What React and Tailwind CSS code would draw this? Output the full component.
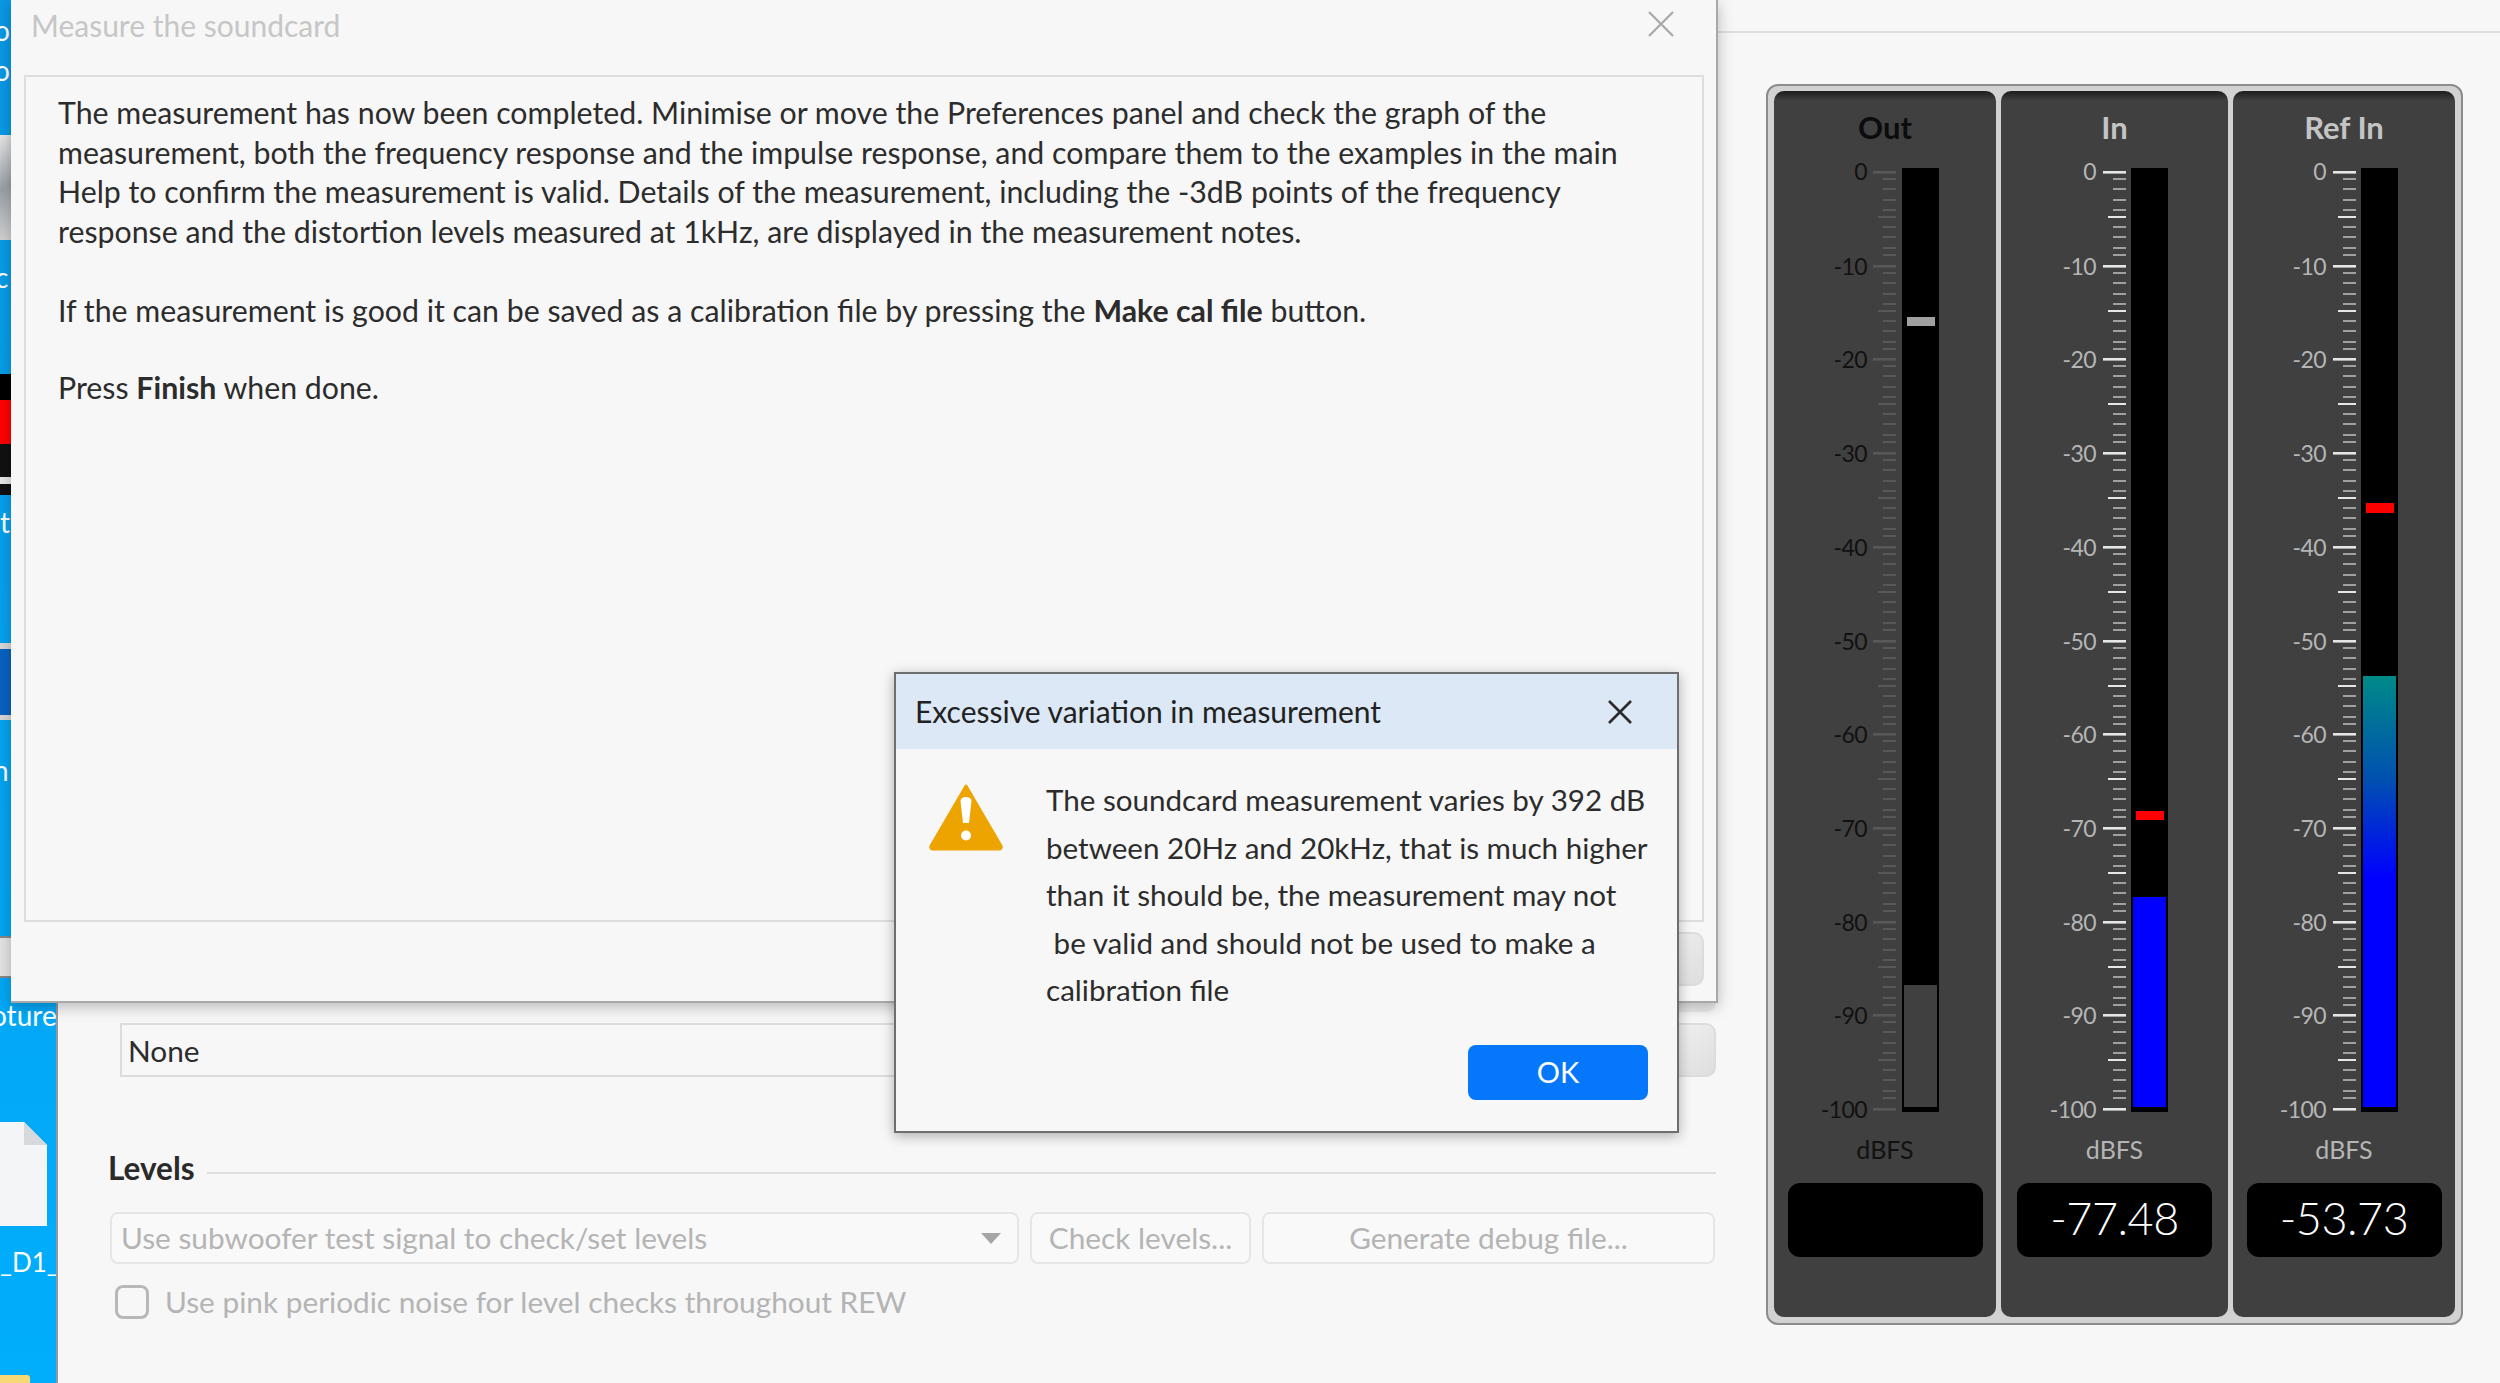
import React from "react";

const FONT = "font-['Lato','Open_Sans',sans-serif]";
const DECADE = [0, 7, 17, 28, 38, 45, 55, 65, 76, 83];

function Scale({ tickEnd, labelEnd, tickMajor, tickMinor, labelColor }) {
  const items = [];
  for (let d = 0; d <= 10; d++) {
    const base = 172 + Math.round(d * 93.7) - 161;
    const offs = d === 10 ? [0] : DECADE;
    offs.forEach((o, i) => {
      const len = i === 0 ? 23 : i === 5 ? 18 : 13;
      const col = i === 0 || i === 5 ? tickMajor : tickMinor;
      items.push(<rect key={d + "-" + i} x={tickEnd - len} y={base + o - 1} width={len} height={i === 0 ? 2.6 : 2} fill={col} />);
    });
    items.push(
      <text key={"l" + d} x={labelEnd} y={base + 8 + (d ? 1 : 0)} textAnchor="end" fontSize="23" letterSpacing="-0.6" fill={labelColor} fontFamily="Lato">
        {d === 0 ? "0" : "-" + d * 10}
      </text>
    );
  }
  return <>{items}</>;
}

function Meter({ width, title, titleColor, barX, tickEnd, labelEnd, tickMajor, tickMinor, labelColor, fill, peak, value }) {
  return (
    <div className="relative flex flex-col items-center h-[1226px] rounded-[10px] bg-[linear-gradient(#1d1d1d,#404040_10px)]" style={{ width }}>
      <div className={`h-[70px] pt-[16px] text-[31px] leading-[40px] font-bold ${titleColor}`}>{title}</div>
      <svg width={width} height="960" className="block shrink-0">
        <Scale tickEnd={tickEnd} labelEnd={labelEnd} tickMajor={tickMajor} tickMinor={tickMinor} labelColor={labelColor} />
        <rect x={barX} y="7" width="37" height="944" fill="#000" />
        <defs>
          <linearGradient id="refgrad" x1="0" y1="0" x2="0" y2="1">
            <stop offset="0" stopColor="#008a88" />
            <stop offset="0.24" stopColor="#0050b0" />
            <stop offset="0.47" stopColor="#0000ff" />
            <stop offset="1" stopColor="#0000ff" />
          </linearGradient>
        </defs>
        <rect x={barX + 2} y={fill.top - 161} width="33" height={1107 - fill.top} fill={fill.color} />
        <rect x={barX + 5} y={peak.top - 161} width="28" height={peak.h} fill={peak.color} />
      </svg>
      <div className={`h-[58px] text-[25px] leading-[56px] ${labelColor === "#111111" ? "text-[#111111]" : "text-[#b5b5b5]"}`}>dBFS</div>
      <div className="mt-[4px] w-[195px] h-[74px] rounded-[12px] bg-black text-white text-[45px] leading-[70px] text-center tracking-[-0.5px] font-light">
        {value}
      </div>
    </div>
  );
}

function Btn({ className, children }) {
  return (
    <div className={`flex items-center justify-center rounded-[8px] border-2 border-[#e6e6e6] bg-[#f9f9f9] text-[#b4b4b4] ${className}`}>
      {children}
    </div>
  );
}

function GrayBtn({ className }) {
  return <div className={`rounded-[10px] border-2 border-[#dcdcdc] bg-[linear-gradient(135deg,#f4f4f4,#dedede)] ${className}`} />;
}

function Desktop() {
  return (
    <div className="relative w-[58px] h-full shrink-0 bg-[linear-gradient(#0a98e4,#00aefc)] border-r-2 border-r-[#8f9aa3] overflow-hidden text-white text-[28px] leading-[34px]">
      <span className="absolute left-[-6px] top-[13px]">o</span>
      <span className="absolute left-[-6px] top-[53px]">o</span>
      <div className="absolute left-0 top-[135px] w-[11px] h-[105px] bg-[linear-gradient(160deg,#e8e8e8,#9aa0a6,#d5d5d5)]" />
      <span className="absolute left-[-5px] top-[260px]">c</span>
      <div className="absolute left-0 top-[374px] w-[11px] h-[26px] bg-black" />
      <div className="absolute left-0 top-[400px] w-[11px] h-[44px] bg-[#ff0000]" />
      <div className="absolute left-0 top-[444px] w-[11px] h-[51px] bg-[#111111]" />
      <div className="absolute left-0 top-[477px] w-[11px] h-[7px] bg-[#e8e8e8]" />
      <span className="absolute left-0 top-[505px]">t</span>
      <div className="absolute left-0 top-[643px] w-[11px] h-[77px] border-t-[6px] border-b-[5px] border-[#d8d8d8] bg-[#0a62c0]" />
      <span className="absolute left-[-7px] top-[753px]">n</span>
      <div className="absolute left-0 top-[936px] w-[11px] h-[42px] bg-[#e4e4e4] border-y-2 border-[#888888]" />
      <span className="absolute left-[-9px] top-[998px]">oture</span>
      <svg className="absolute left-0 top-[1122px]" width="48" height="105">
        <path d="M0 0H24L47 23V104H0Z" fill="#f3f5f7" />
        <path d="M24 0V23H47Z" fill="#d7dadd" />
      </svg>
      <span className="absolute left-0 top-[1245px] whitespace-nowrap text-[26px]">_D1_</span>
      <div className="absolute left-0 top-[1375px] w-[30px] h-[8px] rounded-tr-[3px] bg-[#f8d775]" />
    </div>
  );
}

function MeasureDialog() {
  return (
    <div className="absolute left-[11px] top-0 w-[1707px] h-[1003px] flex flex-col bg-[#f7f7f7] border-r-2 border-b-2 border-[#a8a8a8] shadow-[0_4px_14px_rgba(0,0,0,0.25)]">
      <div className="h-[75px] flex justify-between pl-[20px] pr-[42px] pt-[4px] text-[30px] leading-[42px] text-[#c6c6c6]">
        <span>Measure the soundcard</span>
        <svg width="26" height="26" className="mt-[7px]" stroke="#a8a8a8" strokeWidth="2.2">
          <path d="M1 1L25 25M25 1L1 25" />
        </svg>
      </div>
      <div className="ml-[13px] w-[1680px] h-[847px] border-2 border-[#dedede] pl-[32px] pt-[16px] text-[30.3px] leading-[39.5px] text-[#2c2c2c]">
        <p>The measurement has now been completed. Minimise or move the Preferences panel and check the graph of the</p>
        <p>measurement, both the frequency response and the impulse response, and compare them to the examples in the main</p>
        <p>Help to confirm the measurement is valid. Details of the measurement, including the -3dB points of the frequency</p>
        <p>response and the distortion levels measured at 1kHz, are displayed in the measurement notes.</p>
        <p className="mt-[39.5px]">If the measurement is good it can be saved as a calibration file by pressing the <b>Make cal file</b> button.</p>
        <p className="mt-[38px]">Press <b>Finish</b> when done.</p>
      </div>
      <div className="flex justify-end pr-[12px] pt-[10px]">
        <GrayBtn className="w-[60px] h-[54px]" />
      </div>
    </div>
  );
}

function AlertDialog() {
  return (
    <div className="absolute left-[894px] top-[672px] w-[785px] h-[461px] flex flex-col bg-[#f7f7f7] border-2 border-[#6e6e6e] shadow-[0_3px_12px_rgba(0,0,0,0.3)]">
      <div className="h-[75px] shrink-0 flex items-center justify-between pl-[19px] pr-[45px] bg-[#dce8f6] text-[30px] text-[#222222]">
        <span>Excessive variation in measurement</span>
        <svg width="24" height="24" stroke="#2a2a2a" strokeWidth="2.6">
          <path d="M1 1L23 23M23 1L1 23" />
        </svg>
      </div>
      <div className="flex pl-[32px] pr-[30px]">
        <svg width="76" height="68" viewBox="0 0 76 68" className="mt-[34px] shrink-0">
          <path d="M38 3L73 63a2 2 0 0 1-2 3H5a2 2 0 0 1-2-3Z" fill="#eea400" stroke="#eea400" strokeWidth="3" strokeLinejoin="round" />
          <path d="M32.5 18a5.5 4 0 0 1 11 0L41 40h-6Z" fill="#fff" />
          <circle cx="38" cy="52.5" r="5" fill="#fff" />
        </svg>
        <div className="ml-[42px] pt-[27px] text-[29.6px] leading-[47.5px] text-[#2c2c2c] whitespace-pre">
          <p>The soundcard measurement varies by 392 dB</p>
          <p>between 20Hz and 20kHz, that is much higher</p>
          <p>than it should be, the measurement may not</p>
          <p> be valid and should not be used to make a</p>
          <p>calibration file</p>
        </div>
      </div>
      <div className="flex justify-end pr-[29px] mt-[31px]">
        <div className="w-[180px] h-[55px] rounded-[8px] bg-[#0477fb] text-white text-[29px] flex items-center justify-center">OK</div>
      </div>
    </div>
  );
}

export default function App() {
  return (
    <div className={`relative w-[2500px] h-[1383px] overflow-hidden flex ${FONT}`}>
      <Desktop />
      <div className="flex-1 flex flex-col bg-[#f7f7f7]">
        <div className="h-[33px] shrink-0 border-b-2 border-[#dfdfdf]" />
        <div className="flex flex-1">
          <div className="w-[1658px] shrink-0 pl-[50px] text-[29.8px]">
            <div className="h-[950px]" />
            <div className="flex justify-end">
              <GrayBtn className="w-[60px] h-[29px] opacity-50" />
            </div>
            <div className="flex gap-[8px] ml-[12px] mt-[11px] h-[54px]">
              <div className="flex-1 flex items-center border-2 border-[#dcdcdc] pl-[6px] pt-[2px] text-[#2c2c2c]">None</div>
              <GrayBtn className="w-[60px]" />
            </div>
            <div className="flex items-center gap-[12px] mt-[72px] h-[40px]">
              <span className="font-bold text-[#2a2a2a] text-[31.5px]">Levels</span>
              <div className="flex-1 h-[2px] mt-[8px] bg-[#dfdfdf]" />
            </div>
            <div className="flex gap-[11px] ml-[2px] mt-[23px] h-[52px]">
              <div className="w-[909px] flex items-center justify-between rounded-[8px] border-2 border-[#e6e6e6] bg-[#f9f9f9] pl-[9px] pr-[16px] text-[#b4b4b4]">
                <span>Use subwoofer test signal to check/set levels</span>
                <svg width="20" height="11">
                  <path d="M0 0H20L10 11Z" fill="#a6a6a6" />
                </svg>
              </div>
              <Btn className="w-[221px]">Check levels...</Btn>
              <Btn className="w-[453px]">Generate debug file...</Btn>
            </div>
            <div className="flex items-center gap-[16px] ml-[7px] mt-[16px]">
              <div className="w-[34px] h-[34px] rounded-[8px] border-[3px] border-[#b8b8b8]" />
              <span className="text-[#b4b4b4]">Use pink periodic noise for level checks throughout REW</span>
            </div>
          </div>
          <div className="ml-[50px] mt-[51px] w-[697px] h-[1241px] flex gap-[5px] pt-[5px] px-[6px] pb-[6px] rounded-[12px] border-2 border-[#8c8c8c] bg-[#d2d2d2]">
            <Meter
              width={222} title="Out" titleColor="text-[#0c0c0c]" barX={128} tickEnd={122} labelEnd={93}
              tickMajor="#585858" tickMinor="#585858" labelColor="#111111"
              fill={{ top: 985, color: "#404040" }} peak={{ top: 317, h: 9, color: "#a0a0a0" }} value=""
            />
            <Meter
              width={227} title="In" titleColor="text-[#c4c4c4]" barX={130} tickEnd={125} labelEnd={95}
              tickMajor="#e6e6e6" tickMinor="#a0a0a0" labelColor="#b5b5b5"
              fill={{ top: 897, color: "#0000ff" }} peak={{ top: 811, h: 9, color: "#ff0000" }} value="-77.48"
            />
            <Meter
              width={222} title="Ref In" titleColor="text-[#c4c4c4]" barX={128} tickEnd={123} labelEnd={93}
              tickMajor="#e6e6e6" tickMinor="#a0a0a0" labelColor="#b5b5b5"
              fill={{ top: 676, color: "url(#refgrad)" }} peak={{ top: 503, h: 10, color: "#ff0000" }} value="-53.73"
            />
          </div>
        </div>
      </div>
      <MeasureDialog />
      <AlertDialog />
    </div>
  );
}
